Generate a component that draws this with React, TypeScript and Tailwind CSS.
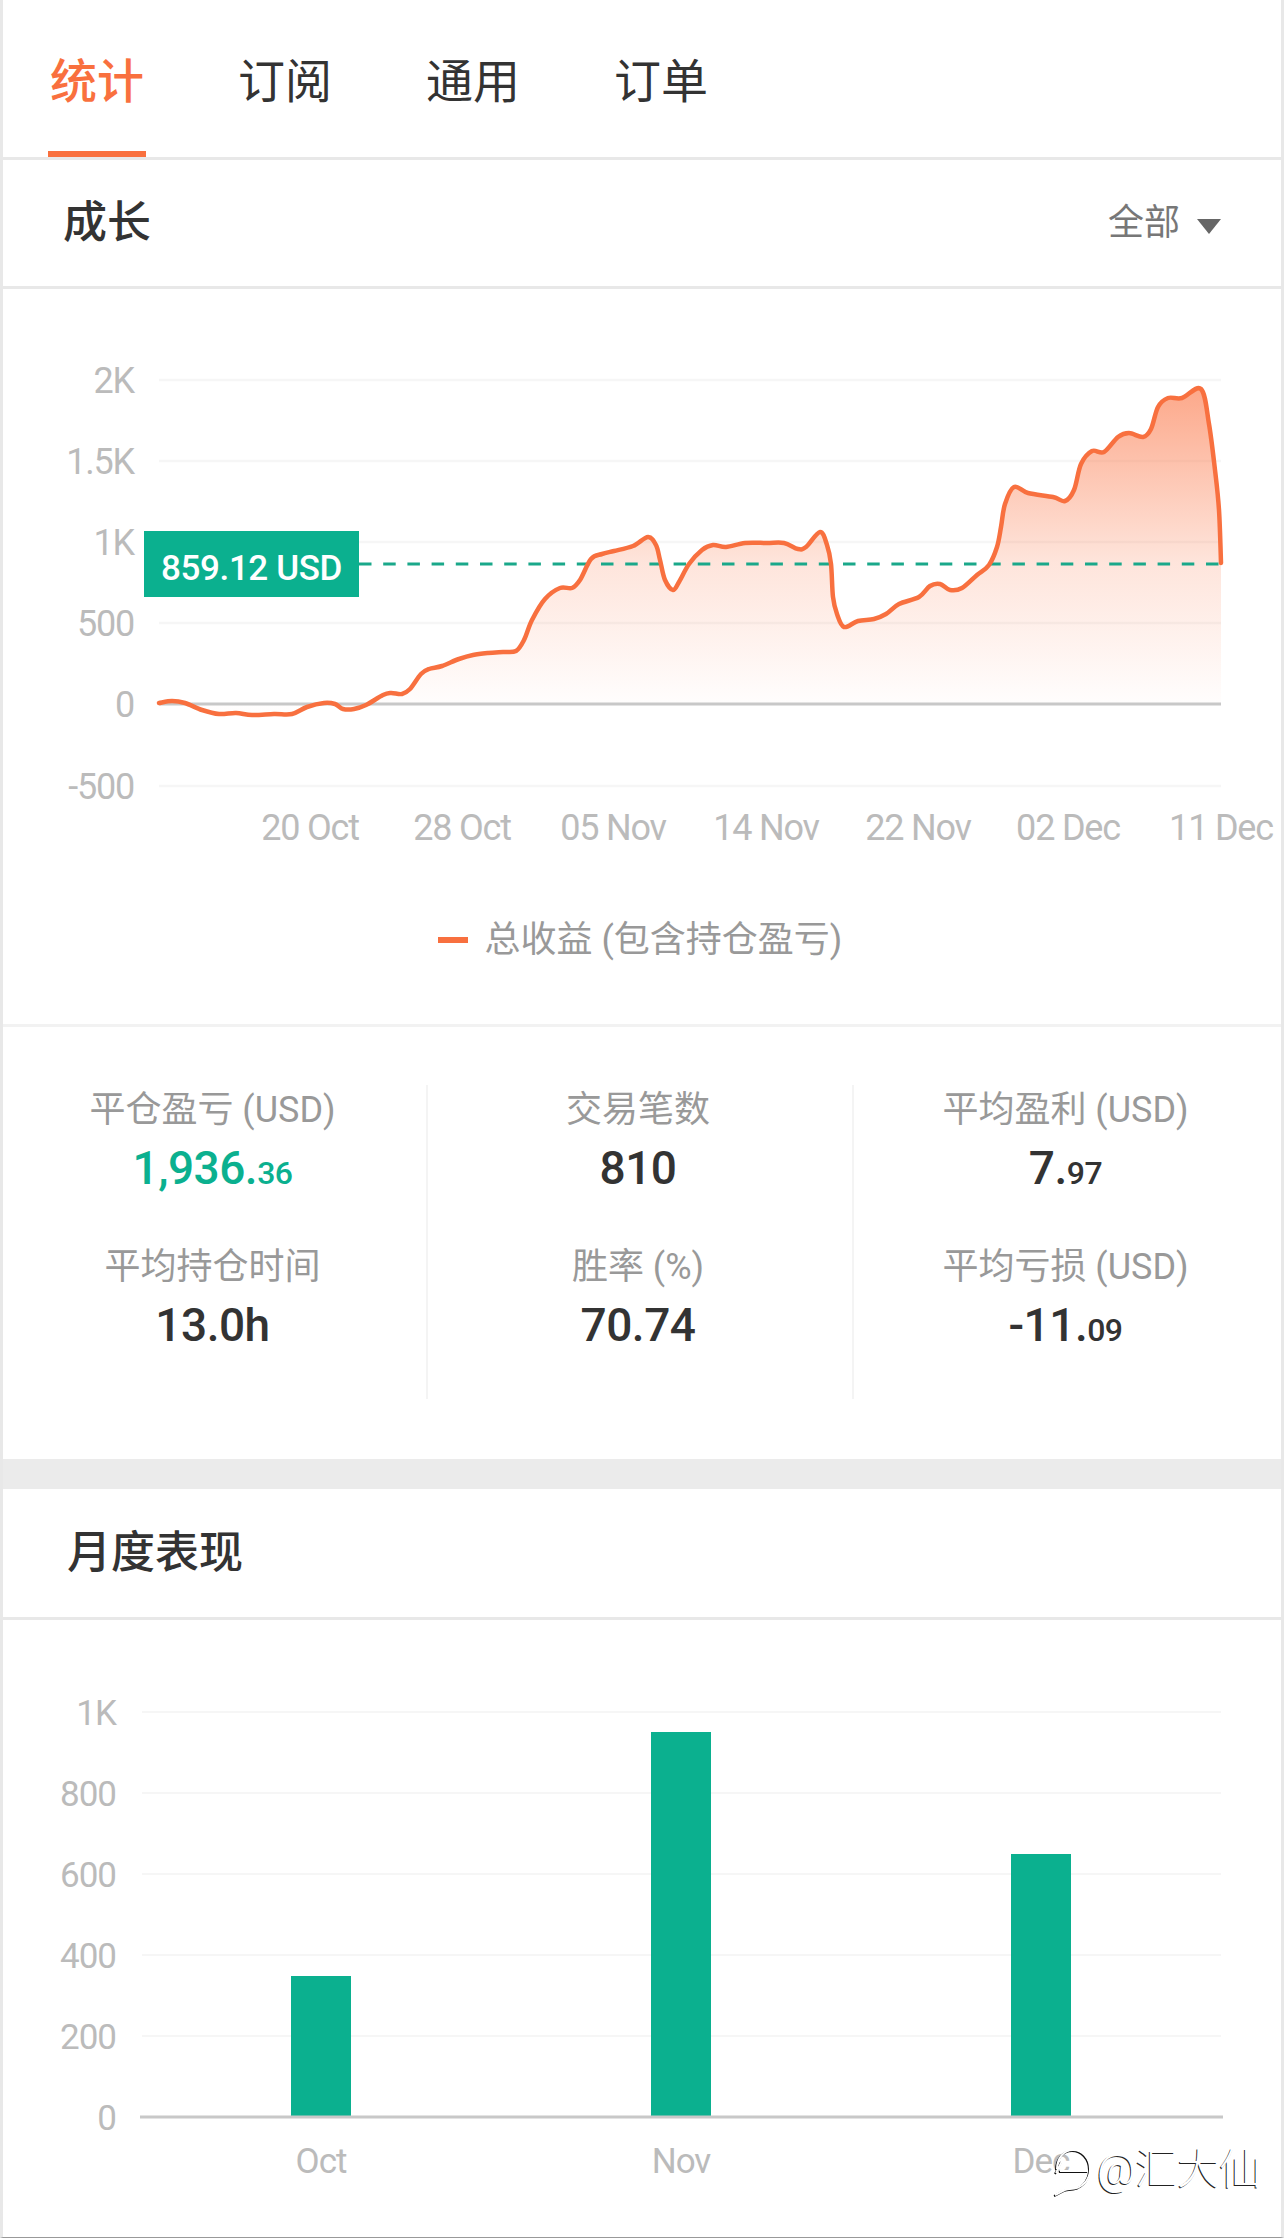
const growth: [number, number][] = [
  [159, 706], [172, 704], [185, 706], [202, 713], [219, 717], [236, 716], [252, 718], [274, 717], [292, 717],
  [307, 710], [324, 706], [335, 707], [343, 712], [354, 712], [366, 708], [383, 698], [391, 696], [402, 697],
  [410, 692], [421, 677], [429, 672], [442, 669], [459, 662], [473, 658], [488, 656], [503, 655], [516, 654],
  [524, 643], [532, 623], [545, 602], [560, 591], [572, 591], [580, 583], [591, 562], [602, 557], [614, 554],
  [633, 549], [648, 540], [656, 548], [660, 563], [665, 583], [673, 593], [679, 585], [689, 567], [702, 553],
  [713, 548], [726, 550], [745, 546], [767, 546], [784, 546], [798, 552], [806, 550], [820, 535], [827, 548],
  [831, 567], [833, 600], [837, 617], [844, 630], [858, 624], [874, 622], [886, 617], [899, 607], [919, 600],
  [930, 589], [940, 587], [950, 593], [962, 591], [977, 578], [989, 568], [997, 550], [1001, 530], [1005, 507],
  [1014, 490], [1028, 496], [1053, 500], [1065, 504], [1074, 493], [1081, 467], [1092, 454], [1104, 455],
  [1118, 440], [1129, 436], [1143, 440], [1151, 432], [1158, 410], [1168, 401], [1182, 401], [1201, 392],
  [1209, 427], [1215, 473], [1219, 513], [1221, 566],
];

const smoothPath = (pts: [number, number][]) => {
  let d = `M${pts[0][0]} ${pts[0][1]}`;
  for (let i = 0; i < pts.length - 1; i++) {
    const p0 = pts[Math.max(i - 1, 0)];
    const p1 = pts[i];
    const p2 = pts[i + 1];
    const p3 = pts[Math.min(i + 2, pts.length - 1)];
    const c1x = p1[0] + (p2[0] - p0[0]) / 6;
    const c1y = p1[1] + (p2[1] - p0[1]) / 6;
    const c2x = p2[0] - (p3[0] - p1[0]) / 6;
    const c2y = p2[1] - (p3[1] - p1[1]) / 6;
    d += `C${c1x.toFixed(1)} ${c1y.toFixed(1)} ${c2x.toFixed(1)} ${c2y.toFixed(1)} ${p2[0]} ${p2[1]}`;
  }
  return d;
};

const linePath = smoothPath(growth);
const yTicks = [
  ["2K", 383],
  ["1.5K", 464],
  ["1K", 545],
  ["500", 626],
  ["-500", 789],
] as const;
const xTicks = [
  ["20 Oct", 310],
  ["28 Oct", 462],
  ["05 Nov", 613],
  ["14 Nov", 766],
  ["22 Nov", 918],
  ["02 Dec", 1068],
  ["11 Dec", 1221],
] as const;
const barTicks = [
  ["1K", 1715],
  ["800", 1796],
  ["600", 1877],
  ["400", 1958],
  ["200", 2039],
] as const;
const bars = [
  { label: "Oct", x: 291, top: 1979 },
  { label: "Nov", x: 651, top: 1735 },
  { label: "Dec", x: 1011, top: 1857 },
];

const stats = [
  { label: "平仓盈亏 (USD)", value: "1,936.", small: "36", green: true },
  { label: "平均持仓时间", value: "13.0h" },
  { label: "交易笔数", value: "810" },
  { label: "胜率 (%)", value: "70.74" },
  { label: "平均盈利 (USD)", value: "7.", small: "97" },
  { label: "平均亏损 (USD)", value: "-11.", small: "09" },
];

const Stat = ({ label, value, small, green }: { label: string; value: string; small?: string; green?: boolean }) => (
  <div className="flex h-[157px] flex-col items-center">
    <div className="text-[36px] leading-[50px] text-[#999999]">{label}</div>
    <div className={`mt-[5px] text-[46px] leading-[56px] font-medium tracking-[-0.5px] ${green ? "text-[#0bb08f]" : "text-[#333333]"}`}>
      {value}
      {small && <span className="text-[32px]">{small}</span>}
    </div>
  </div>
);

export default function App() {
  return (
    <div className="relative h-[2238px] w-[1284px] overflow-hidden border-x-[3px] border-b border-x-[#e8e8e8] border-b-[#999999] bg-white [font-family:Roboto,'Noto_Sans_CJK_SC',sans-serif]">
      <nav className="flex h-[157px] gap-[90px] pl-[45px]">
        {["统计", "订阅", "通用", "订单"].map((tab, i) => (
          <div key={tab} className="flex w-[98px] flex-col items-center">
            <span className={`mt-[52px] text-[47px] leading-[60px] ${i === 0 ? "font-medium text-[#f9703e]" : "text-[#333333]"}`}>{tab}</span>
            {i === 0 && <span className="mt-auto h-[6px] w-full bg-[#f9703e]" />}
          </div>
        ))}
      </nav>

      <header className="flex h-[132px] items-center justify-between border-y-[3px] border-[#e8e8e8] pr-[60px] pl-[60px]">
        <h2 className="text-[44px] font-medium text-[#333333]">成长</h2>
        <div className="flex items-center gap-[17px] text-[36px] text-[#777777]">
          全部
          <svg width="24" height="15" viewBox="0 0 24 15" className="mt-[6px]">
            <path d="M0 0H24L12 15Z" fill="#666666" />
          </svg>
        </div>
      </header>

      <section className="relative border-b-[3px] border-[#f2f2f2]">
        <svg viewBox="3 292 1278 608" className="block h-[608px] w-[1278px]">
          <defs>
            <linearGradient id="area" x1="0" y1="392" x2="0" y2="707" gradientUnits="userSpaceOnUse">
              <stop offset="0" stopColor="#fb7a4c" stopOpacity="0.65" />
              <stop offset="0.55" stopColor="#fb7a4c" stopOpacity="0.2" />
              <stop offset="1" stopColor="#fb7a4c" stopOpacity="0.01" />
            </linearGradient>
          </defs>
          {[383, 464, 545, 626, 789].map((y) => (
            <line key={y} x1="159" x2="1221" y1={y} y2={y} stroke="#f6f6f6" strokeWidth="2.5" />
          ))}
          <path d={`${linePath}L1221 707L159 707Z`} fill="url(#area)" />
          <line x1="159" x2="1221" y1="707" y2="707" stroke="#c8c8c8" strokeWidth="3" />
          <line x1="359" x2="1221" y1="567" y2="567" stroke="#1aa88a" strokeWidth="3" strokeDasharray="12.5 11.7" />
          <path d={linePath} fill="none" stroke="#f8703f" strokeWidth="4.5" strokeLinejoin="round" strokeLinecap="round" />
          <g fill="#bbbbbb" fontSize="36" letterSpacing="-1.2">
            {yTicks.map(([label, y]) => (
              <text key={label} x="134" y={y + 13} textAnchor="end">{label}</text>
            ))}
            <text x="134" y="720" textAnchor="end">0</text>
            {xTicks.map(([label, x]) => (
              <text key={label} x={x} y="843" textAnchor="middle">{label}</text>
            ))}
          </g>
        </svg>

        <div className="absolute top-[242px] left-[141px] flex h-[66px] w-[215px] items-center justify-center bg-[#0bb08f] pt-[10px] text-[35px] font-medium tracking-[-0.4px] text-white">
          859.12 USD
        </div>

        <div className="flex items-center justify-center gap-[17px] pt-[18px] pb-[59px] pr-[4px] text-[36px] leading-[50px] text-[#999999]">
          <span className="h-[6px] w-[30px] bg-[#f8703f]" />
          总收益 (包含持仓盈亏)
        </div>
      </section>

      <section className="pt-[58px] pb-[60px]">
        <div className="grid h-[314px] grid-cols-[425px_426px_427px]">
          <div className="border-r-2 border-[#f4f4f4] pr-1">
            <Stat {...stats[0]} />
            <Stat {...stats[1]} />
          </div>
          <div className="border-r-2 border-[#f4f4f4] pr-1">
            <Stat {...stats[2]} />
            <Stat {...stats[3]} />
          </div>
          <div className="pr-1">
            <Stat {...stats[4]} />
            <Stat {...stats[5]} />
          </div>
        </div>
      </section>

      <div className="h-[30px] bg-[#ebebeb]" />

      <header className="flex h-[131px] items-center border-b-[3px] border-[#e8e8e8] pl-[64px]">
        <h2 className="text-[44px] font-medium text-[#333333]">月度表现</h2>
      </header>

      <svg viewBox="3 1623 1278 614" className="block h-[614px] w-[1278px]">
        {[1715, 1796, 1877, 1958, 2039].map((y) => (
          <line key={y} x1="142" x2="1221" y1={y} y2={y} stroke="#f6f6f6" strokeWidth="2" />
        ))}
        {bars.map((bar) => (
          <rect key={bar.label} x={bar.x} y={bar.top} width="60" height={2119 - bar.top} fill="#0bb08f" />
        ))}
        <line x1="140" x2="1223" y1="2120" y2="2120" stroke="#c8c8c8" strokeWidth="3" />
        <g fill="#bbbbbb" fontSize="35" letterSpacing="-1">
          {barTicks.map(([label, y]) => (
            <text key={label} x="116" y={y + 13} textAnchor="end">{label}</text>
          ))}
          <text x="116" y="2133" textAnchor="end">0</text>
          {bars.map((bar) => (
            <text key={bar.label} x={bar.x + 30} y="2176" textAnchor="middle">{bar.label}</text>
          ))}
        </g>
      </svg>

      <div className="absolute top-[2141px] left-[1049px] flex items-center gap-[3px] text-[42px] leading-[52px] font-light text-white [text-shadow:-1px_1px_0_#222222]">
        <svg width="42" height="52" viewBox="0 0 42 52" fill="none" className="mt-[6px]">
          <g stroke="#111111" strokeWidth="2" transform="translate(-1 1)">
            <path d="M3 48C8 46 12 42 18 42C30 42 38 33 38 22C38 11 30 3 21 3C12 3 5 11 5 22" />
            <path d="M4 26L10 14M8 24H36" />
          </g>
          <g stroke="#ffffff" strokeWidth="2">
            <path d="M3 48C8 46 12 42 18 42C30 42 38 33 38 22C38 11 30 3 21 3C12 3 5 11 5 22" />
            <path d="M4 26L10 14M8 24H36" />
          </g>
        </svg>
        @汇大仙
      </div>
    </div>
  );
}
